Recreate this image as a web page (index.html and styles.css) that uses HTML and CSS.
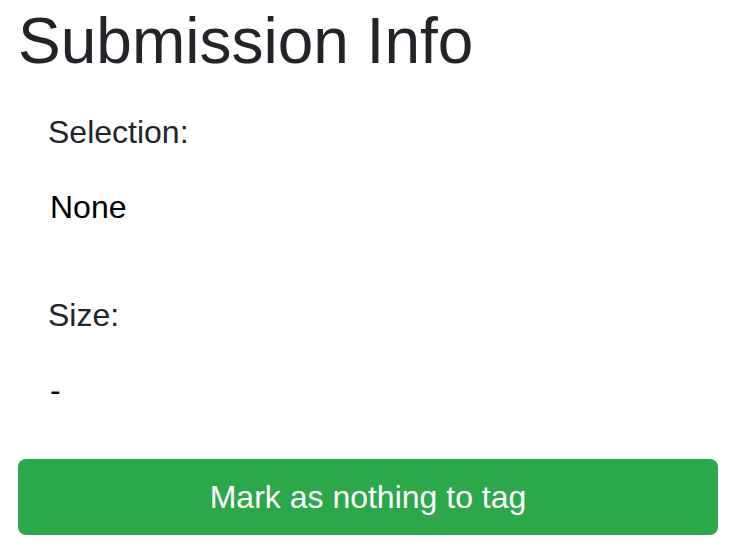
FILE: index.html
```html
<!DOCTYPE html>
<html lang="en">
<head>
<meta charset="utf-8">
<title>Submission Info</title>
<link rel="stylesheet" href="styles.css">
</head>
<body>
<main class="panel">
  <h2 class="title">Submission Info</h2>
  <section class="field">
    <div class="field-label">Selection:</div>
    <div class="field-value">None</div>
  </section>
  <section class="field">
    <div class="field-label">Size:</div>
    <div class="field-value">-</div>
  </section>
  <button class="btn-success" type="button">Mark as nothing to tag</button>
</main>
</body>
</html>
```

FILE: styles.css
```css
* { box-sizing: border-box; }
html, body {
  margin: 0;
  padding: 0;
  background: #fff;
}
body {
  font-family: "Liberation Sans", Arial, Helvetica, sans-serif;
  color: #212529;
}
.panel {
  display: flex;
  flex-direction: column;
  padding: 3px 20px 0 18px;
}
.title {
  margin: 0;
  font-size: 64px;
  font-weight: 400;
  line-height: 1.2;
  color: #212529;
}
.field {
  display: flex;
  flex-direction: column;
  padding-left: 30px;
}
.field:first-of-type { margin-top: 28px; }
.field + .field { margin-top: 60px; }
.field-label {
  font-size: 32px;
  line-height: 48px;
  color: #212529;
}
.field-value {
  margin-top: 27px;
  padding-left: 2px;
  font-size: 32px;
  line-height: 48px;
  color: #000;
}
.btn-success {
  margin-top: 45px;
  height: 76px;
  width: 700px;
  border: none;
  border-radius: 8px;
  background: #2ca74a;
  color: #fff;
  font-family: "Liberation Sans", Arial, Helvetica, sans-serif;
  font-size: 32px;
  line-height: 48px;
  padding: 0;
}
```
